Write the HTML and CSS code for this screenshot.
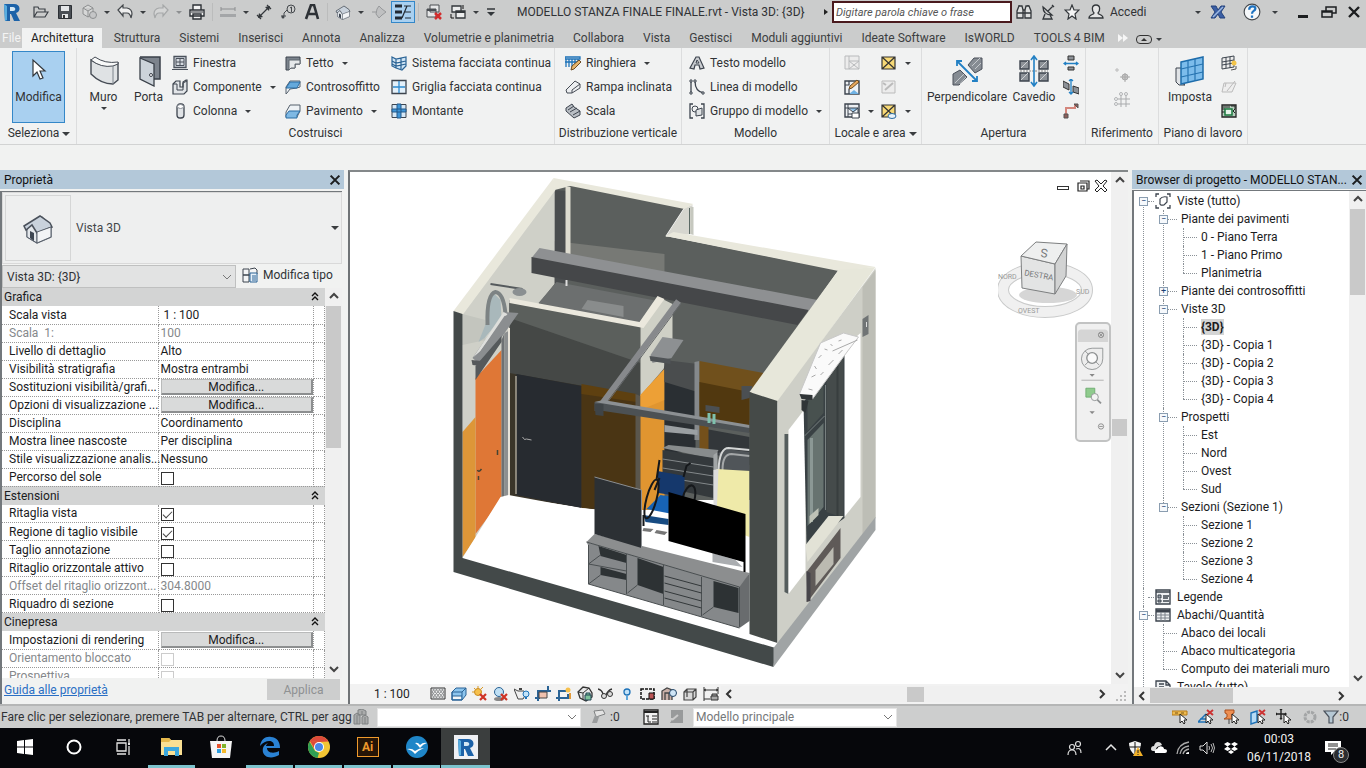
FILE: index.html
```
<!DOCTYPE html>
<html lang="it">
<head>
<title>MODELLO STANZA FINALE FINALE.rvt - Vista 3D: {3D}</title>
<meta charset="UTF-8">
<link rel="stylesheet" href="styles.css">
</head>
<body>

<!-- icon sprite -->
<svg class="sprite" width="0" height="0">
  <symbol id="revit" viewBox="0 0 20 20"><path d="M2 2h10c7 0 7 8 2 9l4 8h-6l-3-7H8v7H3z" fill="#1c62a8"/><path d="M2 2l3 2v14l-2 1z" fill="#58aee0"/><path d="M8 5h3c3 0 3 4 0 4H8z" fill="#d5e8f4"/></symbol>
  <symbol id="open" viewBox="0 0 16 16"><path d="M1 13V3h4l1 2h6v3M1 13l3-5h11l-3 5z" fill="none" stroke="#3a3f45" stroke-width="1.2"/></symbol>
  <symbol id="save" viewBox="0 0 16 16"><path d="M1.500 1.500h13v13h-13z" fill="#4a4f55" stroke="#2c3035"/><path d="M4 2h8v5H4zM5 10h6v4H5z" fill="#e4e6e8"/><path d="M6 11h2v3H6z" fill="#333"/></symbol>
  <symbol id="box" viewBox="0 0 16 16"><path d="M2 4l5-3 5 3v6l-5 3-5-3zM2 4l5 3 5-3M7 7v6" fill="#d6d7d7" stroke="#8d8f90"/><circle cx="12" cy="11" r="3.500" fill="#c5c6c7" stroke="#8d8f90"/></symbol>
  <symbol id="undo" viewBox="0 0 16 16"><path d="M1 6l5-5v3h4q5 1 5 6l-1 4q-1-5-4-5H6v3z" fill="#eee" stroke="#44484c" stroke-width="1.200"/></symbol>
  <symbol id="redo" viewBox="0 0 16 16"><path d="M15 6l-5-5v3H6q-5 1-5 6l1 4q1-5 4-5h4v3z" fill="#d4d5d5" stroke="#a6a8a9" stroke-width="1.200"/></symbol>
  <symbol id="print" viewBox="0 0 16 16"><path d="M4 6V1h8v5M1 6h14v6H1zM4 10h8v5H4z" fill="#f3f3f3" stroke="#2d3136" stroke-width="1.400"/><path d="M2 8h12" stroke="#2d3136"/></symbol>
  <symbol id="measure" viewBox="0 0 16 16"><path d="M1 5h14M1 3v4M15 3v4M1 11h14" fill="none" stroke="#8c8e90"/><path d="M0 10h16v3H0z" fill="#a4a6a8"/></symbol>
  <symbol id="dim" viewBox="0 0 16 16"><path d="M3 13L13 3M1 11l4 4M11 1l4 4" stroke="#33373b" stroke-width="1.200"/><path d="M2 14l1-5 4 4zM14 2l-5 1 4 4z" fill="#33373b"/></symbol>
  <symbol id="tag" viewBox="0 0 16 16"><circle cx="11" cy="5" r="4" fill="none" stroke="#44484c"/><path d="M7 6L4 9v3M1 12h5" fill="none" stroke="#44484c"/><circle cx="3" cy="13" r="1.500" fill="#44484c"/><path d="M10 4l1.500-1v5" fill="none" stroke="#44484c"/></symbol>
  <symbol id="letter" viewBox="0 0 16 16"><path d="M2 15L7 1h3l4 14M5 10h7" fill="none" stroke="#2d3136" stroke-width="2.600"/></symbol>
  <symbol id="house" viewBox="0 0 32 32"><path d="M5 14L20 5l9 9v11l-14 6-10-6V14z" fill="#eef1f4" stroke="#59616c" stroke-width="1.200"/><path d="M5 14l5-2 5 7v12L5 25z" fill="#e3e7eb" stroke="#59616c"/><path d="M2 14L18 4l10 7 2 4-15 6-5-8-6 5z" fill="#c9d2dc" stroke="#4a515b" stroke-width="1.500"/><path d="M15 20l14-5v10l-14 6z" fill="#f2f4f6" stroke="#59616c"/><path d="M8 19l4 2v8l-4-3z" fill="#3d4652"/></symbol>
  <symbol id="section" viewBox="0 0 16 16"><path d="M8 2l3 3 4 3-4 3-3 3-3-4 1-5z" fill="#bfc0c1" stroke="#97999b"/><path d="M1 8h5" stroke="#97999b"/></symbol>
  <symbol id="thin" viewBox="0 0 16 16"><path d="M0 2h7M0 8h7M0 14h7" stroke="#222a33" stroke-width="3"/><path d="M9 2h7M10 8h6M10 14h6M7 14l5-12" stroke="#222a33" stroke-width="1.200"/></symbol>
  <symbol id="closewin" viewBox="0 0 16 16"><path d="M4 1h9v7H4zM1 5h9v8H1z" fill="#e6e7e8" stroke="#4a4e53"/><path d="M1 6h9" stroke="#4a4e53" stroke-width="2"/><path d="M9 9l6 6M15 9l-6 6" stroke="#d22c2c" stroke-width="2.500"/></symbol>
  <symbol id="switch" viewBox="0 0 16 16"><path d="M2 2h9v6H2zM6 7h9v7H6z" fill="#eceded" stroke="#33373b" stroke-width="1.300"/><path d="M6 8h9" stroke="#33373b" stroke-width="2"/><path d="M13 1v4M1 10v4h3" fill="none" stroke="#111"/></symbol>
  <symbol id="more" viewBox="0 0 16 16"><path d="M4 5h8" stroke="#33373b" stroke-width="1.500"/><path d="M4 8h8l-4 4z" fill="#33373b"/></symbol>
  <symbol id="binoc" viewBox="0 0 16 16"><path d="M1 14V7l2-5h3l1 4v8zM9 14V6l1-4h3l2 5v7zM1 9h14M7 6h2M3 2V1M12 2V1" fill="#dfe0e0" stroke="#33373b" stroke-width="1.300"/></symbol>
  <symbol id="dish" viewBox="0 0 16 16"><path d="M3 3q0 8 9 8L3 3zM8 7l5-5M5 10l-2 5h9l-2-4M12 1l2 2" fill="none" stroke="#33373b" stroke-width="1.300"/></symbol>
  <symbol id="star" viewBox="0 0 16 16"><path d="M8 1l2 5h5l-4 4 1 5-4-3-4 3 1-5-4-4h5z" fill="#f4f4f4" stroke="#33373b" stroke-width="1.200"/></symbol>
  <symbol id="user" viewBox="0 0 16 16"><path d="M8 1c5 0 4 6 2 8 0 2 5 1 5 5H1c0-4 5-3 5-5C4 7 3 1 8 1z" fill="#e6e6e6" stroke="#33373b" stroke-width="1.300"/></symbol>
  <symbol id="exch" viewBox="0 0 16 16"><path d="M1 2h5l2 4 3-4h4l-4 6 4 6h-5l-2-4-3 4H1l4-6z" fill="#3b5fa5" stroke="#24427c"/><path d="M3 13L13 3" stroke="#9db9e2" stroke-width="1.500"/></symbol>
  <symbol id="help" viewBox="0 0 16 16"><circle cx="8" cy="8" r="7" fill="#f6f8fa" stroke="#44484c"/><path d="M5.500 6q0-3 3-3 2.500 0 2.500 2 0 1-1.500 2T8 9.500M8 11v2" fill="none" stroke="#1d72c0" stroke-width="2"/></symbol>
  <symbol id="restore" viewBox="0 0 16 16"><path d="M5 7V3h10v6h-4M5 3h10M1 7h10v6H1zM1 8h10" fill="none" stroke="#1c1e20" stroke-width="1.500"/></symbol>
  <symbol id="cross" viewBox="0 0 16 16"><path d="M3 3l10 10M13 3L3 13" stroke="#1c1e20" stroke-width="2.400"/></symbol>
  <symbol id="cursor" viewBox="0 0 16 24"><path d="M2 2v16l4-4 3 7 3-1-3-7h5z" fill="#fff" stroke="#33373b" stroke-width="1.200"/></symbol>

  <!-- ribbon -->
  <symbol id="wall" viewBox="0 0 32 32"><path d="M3 5q10 7 22 5l5-2v17l-5 4q-12 0-22-10z" fill="#dfe2e4" stroke="#454b54" stroke-width="1.400"/><path d="M3 5l4-3q10 7 23 5v2l-5 2q-12 2-22-6z" fill="#f8f9f9" stroke="#454b54"/><path d="M25 11v18" stroke="#7d848c"/></symbol>
  <symbol id="door" viewBox="0 0 32 32"><path d="M7 2h20v22h-6" fill="#7d848d" stroke="#3a4049" stroke-width="1.500"/><path d="M7 3l14 6v22L7 24z" fill="#ccd3da" stroke="#3a4049" stroke-width="1.300"/><circle cx="18" cy="20" r="1.500" fill="#fff" stroke="#3a4049"/></symbol>
  <symbol id="window" viewBox="0 0 16 16"><path d="M2 1.500h12v11H2z" fill="#d5dae0" stroke="#4a515b" stroke-width="1.300"/><path d="M4 3.500h8v7H4zM8 3v8M4 7h8M0 14.500h16" fill="none" stroke="#4a515b"/></symbol>
  <symbol id="comp" viewBox="0 0 16 16"><path d="M1 5l3-3h4v6h3V3l3-2h1v11l-3 3H1z" fill="#e2e5e8" stroke="#3d444e" stroke-width="1.200"/><path d="M1 5h4v6h6V4M11 4l4-2" fill="none" stroke="#3d444e"/></symbol>
  <symbol id="column" viewBox="0 0 16 16"><rect x="5" y="1" width="7" height="14" rx="3" fill="#e0e3e6" stroke="#3d444e" stroke-width="1.300"/><ellipse cx="8.500" cy="3.500" rx="3" ry="2" fill="#fff" stroke="#8a9098"/></symbol>
  <symbol id="roof" viewBox="0 0 16 16"><path d="M1 2h14v7h-5v4H6l-2 2H1z" fill="#7b838c" stroke="#3d444e"/><path d="M4 5h11v4h-5v4H6l-2 2z" fill="#e5e8ea" stroke="#5f666f"/></symbol>
  <symbol id="ceil" viewBox="0 0 16 16"><path d="M1 8l4-6h10v6l-3 1-7 1-3 4-1 1z" fill="#eef2f5" stroke="#55606c"/><path d="M1 9l4-6h10l-3 6z" fill="#64a9dc" stroke="#2b6ca3"/></symbol>
  <symbol id="floor" viewBox="0 0 16 16"><path d="M1 9l4-7h10v6l-3 6H1z" fill="#eef2f5" stroke="#55606c"/><path d="M1 12l3-4h11l-3 4v3H1z" fill="#7fb9e4" stroke="#2b6ca3"/></symbol>
  <symbol id="curtain" viewBox="0 0 16 16"><path d="M1 2l4 2 10-2v9l-4 4-6-2-4-2zM5 4v9M10 3v11M1 6l4 2 10-2M1 9l4 2 10-2" fill="#cfe5f6" stroke="#2a6395" stroke-width="1.200"/></symbol>
  <symbol id="grid" viewBox="0 0 16 16"><path d="M1 1.500h14v13H1z" fill="#e3f0fa" stroke="#3d444e" stroke-width="1.300"/><path d="M8 2v12M2 8h12" stroke="#2d8ad0" stroke-width="1.300"/></symbol>
  <symbol id="mullion" viewBox="0 0 16 16"><path d="M1 1.500h14v13H1z" fill="#d5e8f7" stroke="#3d444e"/><path d="M6 1h4v14H6zM1 6h14v3H1z" fill="#3f96d8" stroke="#23598a"/></symbol>
  <symbol id="rail" viewBox="0 0 16 16"><path d="M0 2h15v2H0zM1 4v8M4 4v8M7 4v8M10 4v6M13 4v3M0 7h13" fill="none" stroke="#1d72b8" stroke-width="1.300"/><path d="M6 15l1-4 7-6 2 2-7 7z" fill="#e8b66c" stroke="#6e4c22"/></symbol>
  <symbol id="ramp" viewBox="0 0 16 16"><path d="M1 11L10 2l5 3v4L7 14H2z" fill="#eceef0" stroke="#454b54"/><path d="M7 14v-3l8-6" fill="none" stroke="#454b54"/></symbol>
  <symbol id="stair" viewBox="0 0 16 16"><path d="M1 5l6-4 2 3 3 2 3 2v4l-6 3-8-7z" fill="#b9bec4" stroke="#3d444e"/><path d="M3 7l6-4M5 9l7-4M8 12l7-4" stroke="#3d444e"/></symbol>
  <symbol id="mtext" viewBox="0 0 16 16"><path d="M1 13L7 2h3l5 11-4 1-1-4H6l-1 4z" fill="#c9ccd0" stroke="#3d444e" stroke-width="1.200"/><path d="M7 8l1-3 2 3z" fill="#fff" stroke="#3d444e"/></symbol>
  <symbol id="mline" viewBox="0 0 16 16"><path d="M2 2v12M6 2q0 11 9 12" fill="none" stroke="#3d444e" stroke-width="1.300"/><path d="M1 1h2v2H1zM1 13h2v2H1zM5 1h2v2H5zM13 13h2v2h-2z" fill="#fff" stroke="#3d444e"/></symbol>
  <symbol id="mgroup" viewBox="0 0 16 16"><path d="M4 1H1v14h3M12 1h3v14h-3" fill="none" stroke="#3d444e" stroke-width="1.300"/><circle cx="6" cy="6" r="3" fill="none" stroke="#3d444e"/><path d="M7 7l6-2v7l-6 1z" fill="#dfe2e4" stroke="#3d444e"/></symbol>
  <symbol id="room0" viewBox="0 0 16 16"><path d="M1 1h14v13H1zM5 1v13M5 6h10M5 6l10 8M15 6L5 14" fill="#ececec" stroke="#b8babc"/></symbol>
  <symbol id="room1" viewBox="0 0 16 16"><path d="M1 2h14v13H1z" fill="#eef1f4" stroke="#3d444e" stroke-width="1.400"/><path d="M5 15l5-4 5 4z" fill="#6fb2e4"/><path d="M5 2v4H1M5 10v5" fill="none" stroke="#3d444e" stroke-width="1.200"/><path d="M5 10l1-3 7-6 2 2-7 6z" fill="#e8a85c" stroke="#6e4c22"/></symbol>
  <symbol id="room2" viewBox="0 0 16 16"><path d="M1 1h14v13H1z" fill="#eef1f4" stroke="#3d444e" stroke-width="1.400"/><path d="M5 5h10l-5 4z" fill="#8fc3ea"/><path d="M4 1v4M1 5h3v9M4 5h10v6H4M4 5l5 4 5-4" fill="none" stroke="#3d444e"/><path d="M8 10h7v5H8z" fill="#fff" stroke="#3d444e"/></symbol>
  <symbol id="area" viewBox="0 0 16 16"><path d="M1 2h13v12H1zM1 2l13 12M14 2L1 14" fill="#f7d976" stroke="#333" stroke-width="1.200"/></symbol>
  <symbol id="area0" viewBox="0 0 16 16"><path d="M1 2h13v12H1z" fill="#ececec" stroke="#bbb"/><path d="M4 11l8-7M2 4l3 2" stroke="#bbb" stroke-width="2"/></symbol>
  <symbol id="area2" viewBox="0 0 16 16"><path d="M1 2h13v12H1zM1 2l13 12M14 2L1 14" fill="#f7d976" stroke="#333" stroke-width="1.200"/><ellipse cx="11" cy="13" rx="4" ry="2.500" fill="#e9f2f8" stroke="#2b6ca3"/></symbol>
  <symbol id="perp" viewBox="0 0 32 32"><path d="M2 30V19l7-4 7 7-8 8zM17 10l6-7h8v11l-7 4z" fill="#868c93" stroke="#4a515b"/><path d="M4 28l9-9M9 29l6-7M21 11l8-8M24 14l6-6" stroke="#c5c9cd"/><path d="M6 6l20 20M6 11V6h5M26 21v5h-5" fill="none" stroke="#2280c4" stroke-width="1.800"/></symbol>
  <symbol id="shaft" viewBox="0 0 32 32"><path d="M2 6h9v8H2zM21 6h9v8h-9zM2 18h9v8H2zM21 18h9v8h-9z" fill="#8d9298" stroke="#3d444e" stroke-width="1.400"/><path d="M3 13l7-7M22 13l7-7M3 25l7-7M22 25l7-7" stroke="#cfd2d5"/><path d="M2 16h28" stroke="#888" stroke-dasharray="2 1"/><path d="M16 2v29M13 5l3-4 3 4M13 27l3 4 3-4" fill="none" stroke="#2280c4" stroke-width="1.600"/></symbol>
  <symbol id="opwall" viewBox="0 0 16 16"><path d="M5 1h6v4H5zM5 12h6v3H5z" fill="#8d9298" stroke="#333"/><path d="M1 8.500h14M3 7L1 8.500 3 10M13 7l2 1.500-2 1.500" fill="none" stroke="#2280c4" stroke-width="1.300"/></symbol>
  <symbol id="opvert" viewBox="0 0 16 16"><path d="M0 2l6 3v6L0 8zM10 7l6 2v6l-6-2z" fill="#8d9298" stroke="#333"/><path d="M8 0v15M6 2l2-2 2 2M6 13l2 2 2-2" fill="none" stroke="#2280c4" stroke-width="1.300"/></symbol>
  <symbol id="dormer" viewBox="0 0 16 16"><path d="M3 14V5h9V2" fill="none" stroke="#d4867c" stroke-width="2"/><path d="M11 1h4v4zM1 11h4v4H1z" fill="#8d5f5b" stroke="#555"/></symbol>
  <symbol id="level0" viewBox="0 0 16 16"><path d="M1 3h4M3 1v4" stroke="#bbb"/><circle cx="11" cy="10" r="3" fill="#c4c4c4" stroke="#aaa"/><path d="M11 6v9M6 10h10" stroke="#aaa"/></symbol>
  <symbol id="grid0" viewBox="0 0 16 16"><path d="M4 8h12M4 13h12M7 4v12M12 4v12" stroke="#a9abad"/><circle cx="7" cy="3" r="1.500" fill="none" stroke="#b2b4b6"/><circle cx="12" cy="3" r="1.500" fill="none" stroke="#b2b4b6"/><circle cx="2" cy="8" r="1.500" fill="none" stroke="#b2b4b6"/><circle cx="2" cy="13" r="1.500" fill="none" stroke="#b2b4b6"/></symbol>
  <symbol id="plane" viewBox="0 0 32 32"><path d="M2 13h6v15l3 2H5l-3-3z" fill="#e0e3e6" stroke="#3d444e"/><path d="M7 7l22-5v22L7 29z" fill="#7cbceb" stroke="#1d6cab" stroke-width="1.500"/><path d="M14 6v21M21 4v22M7 14l22-5M7 22l22-5" stroke="#2573b0" stroke-width="1.200"/></symbol>
  <symbol id="pshow" viewBox="0 0 16 16"><path d="M1 3l12-2v11L1 14zM5 2v11M9 2v11M1 7l12-2M1 10l12-2" fill="#eee" stroke="#3d444e"/><circle cx="13" cy="8" r="2.500" fill="#f5c64a"/><path d="M10 15l5-1v-3" fill="none" stroke="#555"/></symbol>
  <symbol id="pref" viewBox="0 0 16 16"><path d="M3 4h12l-4 9H1zM5 4l-1 4M14 2L6 12" fill="#eee" stroke="#bbb"/></symbol>
  <symbol id="pview" viewBox="0 0 16 16"><path d="M1 2h14v12H1z" fill="#b9cfc0" stroke="#222" stroke-width="1.300"/><path d="M1 4h8M1 6h3M1 9h3" stroke="#222"/><path d="M4 6h7v6H4z" fill="#e7f3ea" stroke="#1b7a3f" stroke-width="1.500"/><path d="M10 3h4v3l-2 2 2 2" fill="none" stroke="#222"/></symbol>
  <symbol id="types" viewBox="0 0 16 16"><path d="M1 2h6v6H1zM8 2l5-1 2 2v4H8M1 8h6v7H1zM7 8h4" fill="#f4f5f6" stroke="#3d444e"/><path d="M8 6h7v9H8z" fill="#e6f0f8" stroke="#2a6395"/><path d="M10 9h4M10 11h4M10 13h4" stroke="#2a6395"/></symbol>

  <!-- browser tree -->
  <symbol id="views" viewBox="0 0 16 16"><path d="M4 1H1v3M12 1h3v3M4 15H1v-3M12 15h3v-3" fill="none" stroke="#3d444e" stroke-width="1.300"/><path d="M5 6q2-3 7-2v5l-3 3q-5 1-4-3z" fill="#fff" stroke="#3d444e" stroke-width="1.200"/></symbol>
  <symbol id="legend" viewBox="0 0 16 16"><path d="M1 1h14v14H1z" fill="#eef0f2" stroke="#3d444e" stroke-width="1.400"/><path d="M1 3h14M8 7h6M8 9h5M8 12h6" stroke="#3d444e" stroke-width="1.400"/><path d="M3 6h3v3H3zM3 11h3v2H3z" fill="#9aa2aa" stroke="#3d444e"/></symbol>
  <symbol id="sched" viewBox="0 0 16 16"><path d="M1 2h14v12H1z" fill="#eef0f2" stroke="#3d444e" stroke-width="1.400"/><path d="M1 4h14" stroke="#3d444e" stroke-width="3"/><path d="M1 8h14M1 11h14M6 5v9M10 5v9" stroke="#7a818a"/></symbol>
  <symbol id="sheet" viewBox="0 0 16 16"><path d="M1 2h10l4 4v9H1zM11 2v4h4M4 5h5M4 8h5" fill="#eef0f2" stroke="#3d444e" stroke-width="1.300"/></symbol>

  <!-- view controls -->
  <symbol id="v-detail" viewBox="0 0 16 16"><path d="M1 2h14v11H1z" fill="#eee" stroke="#333"/><path d="M2 6l3-4M2 9l6-7M2 13l9-11M5 13l9-11M8 13l6-7M11 13l3-4M14 6l-3-4M14 9L8 2M14 13L5 2M11 13L2 2M8 13L2 6M5 13L2 9" stroke="#8c8e90"/></symbol>
  <symbol id="v-style" viewBox="0 0 16 16"><path d="M1 6l4-4h10v7l-4 5H1z" fill="#8cc5ee" stroke="#2a6395"/><path d="M2 10h8v3H2z" fill="#f2f6f8"/><path d="M1 6h10v8H1zM11 6l4-4M1 10h10" fill="none" stroke="#2a6395"/></symbol>
  <symbol id="v-sun" viewBox="0 0 16 16"><circle cx="6" cy="6" r="3.500" fill="#f6c04c" stroke="#c98a1c"/><path d="M6 0v2M0 6h2M2 2l1 1M11 1L9 3" stroke="#d99a27"/><path d="M8 8l6 6M14 8l-6 6" stroke="#cf3325" stroke-width="2.200"/></symbol>
  <symbol id="v-shadow" viewBox="0 0 16 16"><ellipse cx="6" cy="13" rx="5" ry="2" fill="#888"/><circle cx="6" cy="6" r="4.500" fill="#bfe0f5" stroke="#2a6395"/><path d="M8 8l6 6M14 8l-6 6" stroke="#cf3325" stroke-width="2.200"/></symbol>
  <symbol id="v-pot" viewBox="0 0 16 16"><path d="M0 3l4 2h6l2 3-3 5H4L2 8z" fill="#eee" stroke="#444"/><path d="M5 3h3" stroke="#444" stroke-width="2"/><circle cx="12" cy="8" r="3" fill="#c4e3f8" stroke="#1d72b8"/><path d="M11 12h2" stroke="#1d72b8" stroke-width="2"/></symbol>
  <symbol id="v-crop" viewBox="0 0 16 16"><path d="M0 12h5M3 15V5h10V0M3 5h13" fill="none" stroke="#2a6395" stroke-width="2"/><path d="M4 6h8v6H4z" fill="#efc1ae" stroke="#444"/></symbol>
  <symbol id="v-cropshow" viewBox="0 0 16 16"><path d="M0 12h5M3 15V5h7M4 12h8V8" fill="none" stroke="#2a6395" stroke-width="2"/><circle cx="12" cy="4" r="2.500" fill="#f6c04c"/><path d="M14 7v6" stroke="#e29a3a" stroke-width="2"/></symbol>
  <symbol id="v-lock" viewBox="0 0 16 16"><path d="M1 6l5-5 6 1 3 5v4l-6 4-6-3z" fill="#e8e8e8" stroke="#333" stroke-width="1.300"/><path d="M1 6l5 1 6-5M6 7v7" fill="none" stroke="#333"/><path d="M8 9h6v5H8zM9 9V7h4v2" fill="#7fc29b" stroke="#245"/></symbol>
  <symbol id="v-glass" viewBox="0 0 16 16"><path d="M0 3q4 1 5 5M8 9q2-5 6-6M5 9h3" fill="none" stroke="#333" stroke-width="1.300"/><circle cx="6" cy="10" r="2.500" fill="#ddd" stroke="#333"/><circle cx="12" cy="8" r="2.500" fill="#ddd" stroke="#333"/></symbol>
  <symbol id="v-bulb" viewBox="0 0 16 16"><circle cx="8" cy="6" r="3" fill="#c4e3f8" stroke="#1d72b8" stroke-width="1.300"/><path d="M7 10h2v4H7z" fill="#5fa8dc"/></symbol>
  <symbol id="v-temp" viewBox="0 0 16 16"><path d="M1 3h13v10H1z" fill="#eee" stroke="#111" stroke-width="1.500" stroke-dasharray="3 1"/><path d="M9 7h5v6H9z" fill="#b55" stroke="#111"/></symbol>
  <symbol id="v-anal" viewBox="0 0 16 16"><path d="M1 14V5l5-3 5 2v10M4 14V7h4v7" fill="#c9b0a8" stroke="#444" stroke-width="1.300"/><circle cx="12" cy="7" r="3.500" fill="#cfe5f6" stroke="#246"/></symbol>
  <symbol id="v-disp" viewBox="0 0 16 16"><path d="M2 6l3-3h9v8l-3 3H2zM2 6h9v8M11 6l3-3M5 3v8" fill="#d8d8d8" stroke="#444" stroke-width="1.200"/></symbol>
  <symbol id="v-cons" viewBox="0 0 16 16"><path d="M1 1v14M15 1v7M1 4h14M3 3L1 4l2 1M13 3l2 1-2 1M1 13h6" fill="none" stroke="#333"/><path d="M8 10h7v4H8zM9 10V8h5v2" fill="#aaa" stroke="#333"/></symbol>
  <symbol id="up" viewBox="0 0 16 16"><path d="M4 10l4-4 4 4" fill="none" stroke="#444" stroke-width="2"/></symbol>
  <symbol id="down" viewBox="0 0 16 16"><path d="M4 6l4 4 4-4" fill="none" stroke="#444" stroke-width="2"/></symbol>
  <symbol id="left" viewBox="0 0 16 16"><path d="M10 4L6 8l4 4" fill="none" stroke="#333" stroke-width="2"/></symbol>
  <symbol id="right" viewBox="0 0 16 16"><path d="M6 4l4 4-4 4" fill="none" stroke="#333" stroke-width="2"/></symbol>
  <symbol id="fold" viewBox="0 0 8 10"><path d="M1 4l3-3 3 3M1 8l3-3 3 3" fill="none" stroke="#111" stroke-width="1.400"/></symbol>

  <!-- status bar -->
  <symbol id="s-work" viewBox="0 0 16 16"><path d="M1 6l3-2 3 2v9H1zM9 8l3-2 3 2v7H9zM5 1l4-1 4 2v4H5z" fill="#a9abab" stroke="#7f8182"/><path d="M4 6v9M12 8v7M9 2v4" stroke="#7f8182"/></symbol>
  <symbol id="s-req" viewBox="0 0 16 16"><path d="M4 2l9-1 2 4-9 3z" fill="#e3e3e3" stroke="#7f8182"/><path d="M5 6L2 14h5l2-6" fill="#9a9c9d"/></symbol>
  <symbol id="s-opt" viewBox="0 0 16 16"><path d="M1 1h14v14H1z" fill="#f2f2f2" stroke="#222" stroke-width="1.300"/><path d="M1 3h14" stroke="#222" stroke-width="2"/><path d="M3 7h3M5 7v6h3M9 7h5M9 10h5M9 13h5" fill="none" stroke="#222"/></symbol>
  <symbol id="s-add" viewBox="0 0 16 16"><path d="M2 1h12v13H1l3-5H2z" fill="#989a9b"/><path d="M3 11l6-5" stroke="#ccc" stroke-width="2"/></symbol>
  <symbol id="arrow" viewBox="0 0 16 16"><path d="M8 5v9l2-2 2 3 1-1-1-3h3z" fill="#fff" stroke="#222"/></symbol>
  <symbol id="s-link" viewBox="0 0 16 16"><path d="M0 2h15v4H0z" fill="#edbb52" stroke="#b77a15"/><path d="M3 4h3M9 4h3" stroke="#7a5210"/><use href="#arrow"/></symbol>
  <symbol id="s-under" viewBox="0 0 16 16"><path d="M0 13L8 5M0 13h10M2 10h7" fill="none" stroke="#1d72b8" stroke-width="1.500"/><path d="M9 1l6 5M15 1L9 6" stroke="#c33" stroke-width="2"/><use href="#arrow"/></symbol>
  <symbol id="s-pin" viewBox="0 0 16 16"><path d="M1 1h9v3l-2 1v3l3 2H0l3-2V5L1 4z" fill="#ee8f52" stroke="#a94e1c"/><path d="M5 10v5" stroke="#444"/><use href="#arrow"/></symbol>
  <symbol id="s-face" viewBox="0 0 16 16"><path d="M1 4l6-2v11l-6 2z" fill="#b7dbf5" stroke="#1d72b8" stroke-width="1.400"/><path d="M9 1l6 5M15 1L9 6" stroke="#c33" stroke-width="2"/><use href="#arrow"/></symbol>
  <symbol id="s-drag" viewBox="0 0 16 16"><path d="M5 0v10M0 5h10M4 1l1-1 1 1M4 9l1 1 1-1M1 4L0 5l1 1M9 4l1 1-1 1" fill="none" stroke="#222" stroke-width="1.400"/><use href="#arrow"/></symbol>
  <symbol id="s-bg" viewBox="0 0 16 16"><circle cx="8" cy="8" r="5" fill="none" stroke="#a3a5a6" stroke-width="3" stroke-dasharray="3 1"/></symbol>
  <symbol id="s-filter" viewBox="0 0 16 16"><path d="M1 2h14l-5 6v6H6V8z" fill="#b6c8d4" stroke="#4a515b" stroke-width="1.200"/></symbol>

  <!-- taskbar -->
  <symbol id="t-win" viewBox="0 0 24 24"><path d="M4 6l7-1v6.500H4zM12 5l8-1v7.500h-8zM4 12.500h7V19l-7-1zM12 12.500h8V20l-8-1z" fill="#fff"/></symbol>
  <symbol id="t-cort" viewBox="0 0 24 24"><circle cx="12" cy="12" r="6.500" fill="none" stroke="#fff" stroke-width="2"/></symbol>
  <symbol id="t-task" viewBox="0 0 24 24"><path d="M6 8h9v8H6zM6 5h9M6 19h9M18 4v4M18 11v9" fill="none" stroke="#e5e5e5" stroke-width="1.300"/><path d="M17 8h2v2h-2z" fill="#e5e5e5"/></symbol>
  <symbol id="t-exp" viewBox="0 0 24 24"><path d="M1 3h8l2 2h11v15H1z" fill="#f9df93"/><path d="M1 3h8l2 2-2 2H1z" fill="#e5b84c"/><path d="M4 21v-9h15v9h-4v-5H8v5z" fill="#3ba7de"/></symbol>
  <symbol id="t-store" viewBox="0 0 24 24"><path d="M8 6q0-5 4-5t4 5" fill="none" stroke="#ddd"/><path d="M1 6h22l-2 17H3z" fill="#f5f5f5"/><path d="M8 9h4v4H8z" fill="#e6532d"/><path d="M13 9h4v4h-4z" fill="#7fb32b"/><path d="M8 14h4v4H8z" fill="#2d9ee0"/><path d="M13 14h4v4h-4z" fill="#f5b92a"/></symbol>
  <symbol id="t-edge" viewBox="0 0 24 24"><path d="M2 11C3 4 8 1 13 2c6 0 9 5 9 11H9c0 5 7 6 12 3v4C13 25 3 22 5 13c1-3 3-4 5-5-1 1-2 2-2 3h8c0-7-9-6-14 0z" fill="#2a82d4"/></symbol>
  <symbol id="t-chrome" viewBox="0 0 24 24"><circle cx="12" cy="12" r="11" fill="#f2c534"/><path d="M2.500 6.500A11 11 0 0 1 21.500 6.500L12 7z" fill="#dc4a3b"/><path d="M2.500 6.500L8 16l4 2-1.500 5A11 11 0 0 1 2.500 6.500z" fill="#2f9e54"/><path d="M3 6l9 1v6l-4 2z" fill="#dc4a3b"/><circle cx="12" cy="12" r="5" fill="#fff"/><circle cx="12" cy="12" r="4" fill="#4a88e8"/></symbol>
  <symbol id="t-oo" viewBox="0 0 24 24"><circle cx="12" cy="12" r="11" fill="#1f86c8"/><path d="M10 8q3-1 5 2 3-3 7-2-4 1-7 5-2-3-5-5zM2 14q5-1 8 2 4-3 9-3-5 2-9 6-3-4-8-5z" fill="#fff"/></symbol>
  <symbol id="t-people" viewBox="0 0 16 16"><circle cx="5" cy="7" r="2.500" fill="none" stroke="#ddd" stroke-width="1.200"/><circle cx="11" cy="4" r="2.500" fill="none" stroke="#ddd" stroke-width="1.200"/><path d="M1 15q0-5 4-5t4 5M9 9q5-2 5 4" fill="none" stroke="#ddd" stroke-width="1.200"/></symbol>
  <symbol id="t-up" viewBox="0 0 16 16"><path d="M3 10l5-5 5 5" fill="none" stroke="#e5e5e5" stroke-width="1.500"/></symbol>
  <symbol id="t-shield" viewBox="0 0 16 16"><path d="M8 1l6 2q0 8-6 12Q2 11 2 3z" fill="#f4f4f4"/><path d="M8 2v12M2 7h12" stroke="#111"/><path d="M11 7l5 9H6z" fill="#f3b229"/><path d="M11 10v3M11 14v1" stroke="#222"/></symbol>
  <symbol id="t-cloud" viewBox="0 0 16 16"><path d="M0 9q0-3 3-3 1-4 4-4 3 0 4 3l-5 2-2 4H3q-3 0-3-2z" fill="#ddd"/><path d="M4 13q-1-4 2-4 2-4 6-2 1 1 1 2 3 0 3 2 0 2-2 2z" fill="#fff"/></symbol>
  <symbol id="t-wifi" viewBox="0 0 16 16"><path d="M2 14Q3 4 14 2M5 14q1-7 9-8M8 14q1-4 6-5" fill="none" stroke="#aaa" stroke-width="1.300"/><path d="M11 14q0-2 3-2v2z" fill="#fff"/></symbol>
  <symbol id="t-vol" viewBox="0 0 16 16"><path d="M1 6h3l4-4v12l-4-4H1z" fill="none" stroke="#ddd"/><path d="M10 6q1 2 0 4M12 4q3 4 0 8M14 3q3 5 0 10" fill="none" stroke="#bbb"/></symbol>
  <symbol id="t-drop" viewBox="0 0 16 16"><path d="M4.500 2L8 4 4.500 6.500 1 4zM11.500 2L15 4l-3.500 2.500L8 4zM4.500 6.500L8 9l-3.500 2L1 9zM11.500 6.500L15 9l-3.500 2L8 9zM8 10l3 2-3 2-3-2z" fill="#fff"/></symbol>
  <symbol id="t-note" viewBox="0 0 16 16"><path d="M0 1h16v11H9l-3 3v-3H0z" fill="#fff"/><path d="M3 4h10M3 6h10M3 9h8" stroke="#222"/></symbol>
</svg>

<!-- title bar -->
<header class="titlebar">
  <button class="q logo"><svg class="i20"><use href="#revit"/></svg></button>
  <button class="q"><svg><use href="#open"/></svg></button>
  <button class="q"><svg><use href="#save"/></svg></button>
  <button class="q"><svg><use href="#box"/></svg></button>
  <span class="c"><i class="caret"></i></span>
  <button class="q"><svg><use href="#undo"/></svg></button>
  <span class="c"><i class="caret"></i></span>
  <button class="q"><svg><use href="#redo"/></svg></button>
  <span class="c"><i class="caret dim"></i></span>
  <button class="q"><svg><use href="#print"/></svg></button>
  <span class="vsep"></span>
  <button class="q"><svg><use href="#measure"/></svg></button>
  <span class="c"><i class="caret"></i></span>
  <button class="q"><svg><use href="#dim"/></svg></button>
  <button class="q"><svg><use href="#tag"/></svg></button>
  <button class="q"><svg><use href="#letter"/></svg></button>
  <span class="vsep"></span>
  <button class="q"><svg><use href="#house"/></svg></button>
  <span class="c"><i class="caret"></i></span>
  <button class="q"><svg><use href="#section"/></svg></button>
  <button class="q on"><svg><use href="#thin"/></svg></button>
  <span class="vsep"></span>
  <button class="q"><svg><use href="#closewin"/></svg></button>
  <button class="q"><svg><use href="#switch"/></svg></button>
  <span class="c"><i class="caret"></i></span>
  <button class="q slim"><svg><use href="#more"/></svg></button>
  <h1 class="title">MODELLO STANZA FINALE FINALE.rvt - Vista 3D: {3D}</h1>
  <div class="infocenter">
    <span class="c"><i class="caret side"></i></span>
    <input class="search" type="text" placeholder="Digitare parola chiave o frase" aria-label="Cerca">
    <button class="q"><svg><use href="#binoc"/></svg></button>
    <button class="q"><svg><use href="#dish"/></svg></button>
    <button class="q"><svg><use href="#star"/></svg></button>
    <button class="login"><svg><use href="#user"/></svg>Accedi<i class="caret"></i></button>
    <button class="q wide"><svg><use href="#exch"/></svg></button>
    <button class="q wide"><svg class="i18"><use href="#help"/></svg></button>
    <span class="c"><i class="caret"></i></span>
    <button class="q win min"><i class="dash"></i></button>
    <button class="q win"><svg><use href="#restore"/></svg></button>
    <button class="q"><svg><use href="#cross"/></svg></button>
  </div>
</header>

<nav class="tabs">
  <a class="file" href="#">File</a>
  <a class="active" href="#">Architettura</a>
  <a href="#">Struttura</a>
  <a href="#">Sistemi</a>
  <a href="#">Inserisci</a>
  <a href="#">Annota</a>
  <a href="#">Analizza</a>
  <a href="#">Volumetrie e planimetria</a>
  <a href="#">Collabora</a>
  <a href="#">Vista</a>
  <a href="#">Gestisci</a>
  <a href="#">Moduli aggiuntivi</a>
  <a href="#">Ideate Software</a>
  <a href="#">IsWORLD</a>
  <a href="#">TOOLS 4 BIM</a>
  <span class="more"><i></i><i></i></span>
  <button class="ribbonmin"><span><i class="tri-up"></i></span><i class="caret"></i></button>
</nav>

<!-- ribbon -->
<section class="ribbon">
  <div class="panel p-sel">
    <div class="tools"><button class="big sel"><svg class="cur"><use href="#cursor"/></svg>Modifica</button></div>
    <div class="ptitle">Seleziona <i class="caret lg"></i></div>
  </div>
  <div class="panel p-build">
    <div class="tools">
      <button class="big"><svg><use href="#wall"/></svg>Muro<i class="caret"></i></button>
      <button class="big"><svg><use href="#door"/></svg>Porta</button>
      <div class="col c1">
        <button><svg><use href="#window"/></svg>Finestra</button>
        <button><svg><use href="#comp"/></svg>Componente<i class="caret"></i></button>
        <button><svg><use href="#column"/></svg>Colonna<i class="caret"></i></button>
      </div>
      <div class="col c2">
        <button><svg><use href="#roof"/></svg>Tetto<i class="caret"></i></button>
        <button><svg><use href="#ceil"/></svg>Controsoffitto</button>
        <button><svg><use href="#floor"/></svg>Pavimento<i class="caret"></i></button>
      </div>
      <div class="col">
        <button><svg><use href="#curtain"/></svg>Sistema facciata continua</button>
        <button><svg><use href="#grid"/></svg>Griglia facciata continua</button>
        <button><svg><use href="#mullion"/></svg>Montante</button>
      </div>
    </div>
    <div class="ptitle">Costruisci</div>
  </div>
  <div class="panel p-circ">
    <div class="tools"><div class="col">
      <button><svg><use href="#rail"/></svg>Ringhiera<i class="caret"></i></button>
      <button><svg><use href="#ramp"/></svg>Rampa inclinata</button>
      <button><svg><use href="#stair"/></svg>Scala</button>
    </div></div>
    <div class="ptitle">Distribuzione verticale</div>
  </div>
  <div class="panel p-model">
    <div class="tools"><div class="col">
      <button><svg><use href="#mtext"/></svg>Testo modello</button>
      <button><svg><use href="#mline"/></svg>Linea di modello</button>
      <button><svg><use href="#mgroup"/></svg>Gruppo di modello<i class="caret"></i></button>
    </div></div>
    <div class="ptitle">Modello</div>
  </div>
  <div class="panel p-room">
    <div class="tools">
      <div class="col">
        <button><svg><use href="#room0"/></svg></button>
        <button><svg><use href="#room1"/></svg></button>
        <button><svg><use href="#room2"/></svg><i class="caret"></i></button>
      </div>
      <div class="col">
        <button><svg><use href="#area"/></svg><i class="caret"></i></button>
        <button><svg><use href="#area0"/></svg></button>
        <button><svg><use href="#area2"/></svg><i class="caret"></i></button>
      </div>
    </div>
    <div class="ptitle">Locale e area <i class="caret lg"></i></div>
  </div>
  <div class="panel p-open">
    <div class="tools">
      <button class="big"><svg><use href="#perp"/></svg>Perpendicolare</button>
      <button class="big"><svg><use href="#shaft"/></svg>Cavedio</button>
      <div class="col">
        <button><svg><use href="#opwall"/></svg></button>
        <button><svg><use href="#opvert"/></svg></button>
        <button><svg><use href="#dormer"/></svg></button>
      </div>
    </div>
    <div class="ptitle">Apertura</div>
  </div>
  <div class="panel p-ref">
    <div class="tools"><div class="col">
      <button><svg><use href="#level0"/></svg></button>
      <button><svg><use href="#grid0"/></svg></button>
    </div></div>
    <div class="ptitle">Riferimento</div>
  </div>
  <div class="panel p-plane">
    <div class="tools">
      <button class="big"><svg><use href="#plane"/></svg>Imposta</button>
      <div class="col">
        <button><svg><use href="#pshow"/></svg></button>
        <button><svg><use href="#pref"/></svg></button>
        <button><svg><use href="#pview"/></svg></button>
      </div>
    </div>
    <div class="ptitle">Piano di lavoro</div>
  </div>
</section>

<main class="work">
  <!-- properties palette -->
  <aside class="props">
    <div class="head">Proprietà<button class="x"><svg><use href="#cross"/></svg></button></div>
    <div class="pbody">
      <div class="type"><span class="thumb"><svg><use href="#house"/></svg></span>Vista 3D<i class="caret lg"></i></div>
      <div class="inst">
        <select aria-label="Vista"><option>Vista 3D: {3D}</option></select>
        <button class="edit"><svg><use href="#types"/></svg>Modifica tipo</button>
      </div>
      <div class="scroller">
        <div class="gridwrap">
        <table class="params">
          <colgroup><col class="k"><col class="v"><col class="e"></colgroup>
          <tr class="grp"><th colspan="3">Grafica<svg><use href="#fold"/></svg></th></tr>
          <tr><td>Scala vista</td><td>&nbsp;1 : 100</td><td></td></tr>
          <tr class="off"><td>Scala&nbsp; 1:</td><td>100</td><td></td></tr>
          <tr><td>Livello di dettaglio</td><td>Alto</td><td></td></tr>
          <tr><td>Visibilità stratigrafia</td><td>Mostra entrambi</td><td></td></tr>
          <tr><td>Sostituzioni visibilità/grafi...</td><td><button>Modifica...</button></td><td></td></tr>
          <tr><td>Opzioni di visualizzazione ...</td><td><button>Modifica...</button></td><td></td></tr>
          <tr><td>Disciplina</td><td>Coordinamento</td><td></td></tr>
          <tr><td>Mostra linee nascoste</td><td>Per disciplina</td><td></td></tr>
          <tr><td>Stile visualizzazione analis...</td><td>Nessuno</td><td></td></tr>
          <tr><td><label for="sole">Percorso del sole</label></td><td><input type="checkbox" id="sole"></td><td></td></tr>
          <tr class="grp"><th colspan="3">Estensioni<svg><use href="#fold"/></svg></th></tr>
          <tr><td><label for="rit">Ritaglia vista</label></td><td><input type="checkbox" id="rit" checked></td><td></td></tr>
          <tr><td><label for="reg">Regione di taglio visibile</label></td><td><input type="checkbox" id="reg" checked></td><td></td></tr>
          <tr><td><label for="ann">Taglio annotazione</label></td><td><input type="checkbox" id="ann"></td><td></td></tr>
          <tr><td><label for="ori">Ritaglio orizzontale attivo</label></td><td><input type="checkbox" id="ori"></td><td></td></tr>
          <tr class="off"><td>Offset del ritaglio orizzont...</td><td>304.8000</td><td></td></tr>
          <tr><td><label for="riq">Riquadro di sezione</label></td><td><input type="checkbox" id="riq"></td><td></td></tr>
          <tr class="grp"><th colspan="3">Cinepresa<svg><use href="#fold"/></svg></th></tr>
          <tr><td>Impostazioni di rendering</td><td><button>Modifica...</button></td><td></td></tr>
          <tr class="off"><td><label for="blo">Orientamento bloccato</label></td><td><input type="checkbox" id="blo" disabled></td><td></td></tr>
          <tr class="off"><td><label for="pro">Prospettiva</label></td><td><input type="checkbox" id="pro" disabled></td><td></td></tr>
        </table>
        </div>
        <div class="vbar"><svg><use href="#up"/></svg><i class="knob k1"></i><svg class="end"><use href="#down"/></svg></div>
      </div>
      <div class="foot"><a href="#">Guida alle proprietà</a><button disabled>Applica</button></div>
    </div>
  </aside>

  <!-- 3D view -->
  <section class="view">
    <div class="stage">
      <svg class="scene" viewBox="350 172 760 512">
        <!-- back walls -->
        <path d="M554 188L570 185 684 207 665 236 838 270 750 395V500H500V300L554 250z" fill="#5b5f5d"/>
        <path d="M554 241L664 254V276L554 258z" fill="#777975"/>
        <path d="M554 190L566 191V290H554z" fill="#4a4d4f"/>
        <path d="M565 187h5v68h-5z" fill="#dedcd0"/>
        <path d="M684 208L692 205V234L665 237z" fill="#d6d6cf"/>
        <path d="M553 178L693 204 684 209 570 186 554 190z" fill="#e9e8dc"/>
        <path d="M690 207h3v28l-3-1z" fill="#c6c8bf"/><path d="M689 208v26" stroke="#5b6964"/>
        <path d="M665 236L673 232 875 267 838 271z" fill="#e9e8dc"/>
        <!-- left wall, inner face -->
        <path d="M554 190V284L538 304 509 300V498L462 560V314z" fill="#cfd0c8"/>
        <path d="M553 178L555 190 462 315 453 311z" fill="#e9e8dc"/>
        <path d="M462 314L485 320V340L462 345z" fill="#c3c5be"/>
        <!-- bathroom floor -->
        <path d="M538 303L556 282 668 303 640 325z" fill="#6c6f6f"/>
        <path d="M587 300L623 306V317L581 309z" fill="#898c8c"/>
        <path d="M566 280v6" stroke="#ddd" stroke-width="2"/>
        <!-- long beam -->
        <path d="M531 258L539 248 817 300 808 311z" fill="#8e9092"/>
        <path d="M531 257L808 310 797 325 531 273z" fill="#454749"/>
        <!-- partition -->
        <path d="M509 303L640 327V400L509 374z" fill="#454846"/>
        <path d="M509 303L640 327V363L509 318z" fill="#5b5f5c"/>
        <path d="M640 326L660 298 672 304V345L663 369 640 396z" fill="#cfd0c6"/>
        <path d="M509 298L639 322 657 296 664 299 643 328 509 303z" fill="#ebe8dd"/>
        <!-- dark door and brown wall -->
        <path d="M509 373L640 396V516L509 497z" fill="#3a3529"/>
        <path d="M516 374L581 386V508L516 495z" fill="#272b30"/>
        <path d="M581 386L636 395V512L581 508z" fill="#4a3514"/>
        <path d="M581 384L636 394V402L581 394z" fill="#5e4010"/>
        <path d="M515.500 376V494" stroke="#ddd8c8"/>
        <path d="M635 394L640 396V516H635z" fill="#5a564d"/>
        <path d="M522 437q2 4 4 2l5 1" stroke="#aaa" fill="none"/>
        <!-- orange door -->
        <path d="M475 378L501 350V499L475 534z" fill="#df7736"/>
        <path d="M462 432L475 417V538L462 557z" fill="#dd9638"/>
        <path d="M501 340L504 333V496L501 499z" fill="#6e7173"/><path d="M504 333L508 331V496H504z" fill="#8c8f90"/>
        <path d="M508.500 328V496" stroke="#e8e4da" stroke-width="2"/>
        <path d="M477 470q1 3 4-1M478 476v4M497 450v5" stroke="#443" fill="none" stroke-width="1.500"/>
        <!-- ceiling lift and lamp -->
        <path d="M490 284L522 289" stroke="#555a5d" stroke-width="2"/><ellipse cx="519" cy="292" rx="7" ry="4" fill="#8a8f91"/>
        <path d="M478 342L486 322Q486 298 494 294L500 300 501 318 484 338z" fill="#a9b8bb"/><path d="M487 325Q486 294 495 292 503 293 505 314" stroke="#7d8384" stroke-width="4" fill="none"/>
        <path d="M472 358L504 312 518 313 481 366z" fill="#8b8e90"/><path d="M473 357L503 312 507 314 480 351z" fill="#dedfdc"/><path d="M476 357L504 316 517 313 482 365z" fill="#8b8e90"/>
        <path d="M471 360L481 361V366L472 365zM475 366l26-30v6l-26 38z" fill="#55595b"/>
        <!-- cupboard and back wall, kitchen side -->
        <path d="M640 395L664 369V510H640z" fill="#e09530"/>
        <path d="M640 395L664 369V400L640 410z" fill="#eda036"/>
        <path d="M664 362L695 368V450L664 455z" fill="#2a2f33"/>
        <path d="M664 360L697 364V392L664 382z" fill="#4a4d4e"/>
        <path d="M694 362L699 361V440H694z" fill="#85898c"/>
        <path d="M699 361L763 373 750 395V420L699 410z" fill="#70501c"/>
        <path d="M699 382L749 392V432L699 425z" fill="#51380f"/>
        <path d="M700 428L749 437V465L700 450z" fill="#33373a"/><path d="M699 425L708 427V450H699z" fill="#74501b"/>
        <path d="M741 386L752 386 749 398 741 400zM705 405L719 407V413L705 411z" fill="#4b4f52"/>
        <path d="M664 425L697 430V435L664 432z" fill="#9ba0a3"/>
        <path d="M650 355L662 337 683 340 671 358 652 363z" fill="#8d9092"/><path d="M649 356L670 359V364L650 361z" fill="#4f5356"/>
        <!-- rails -->
        <path d="M599 407L678 301" stroke="#87898c" stroke-width="6"/><path d="M602 409L680 304" stroke="#66696c"/>
        <path d="M594 402L603 401 749 426V433L603 411H594z" fill="#4c5154"/><path d="M594 402L603 400 749 425V428z" fill="#8c9093"/>
        <path d="M594 404h9v12l-8-1z" fill="#3f4447"/>
        <path d="M707 413h3v10h-3zM712 414h3v10h-3z" fill="#7fc1ae"/>
        <!-- floor -->
        <path d="M462 558L500 497 508 495 579 508 640 514 664 505 749 500V634L775 646 770 650z" fill="#fff"/>
        <!-- drawers and bed -->
        <path d="M662 448L668 445 718 450 713 459z" fill="#888c8d"/>
        <path d="M662 450L713 458V498L662 487z" fill="#34393c"/><path d="M662 459l51 8M662 468l51 8M662 477l51 8" stroke="#83888a"/>
        <path d="M713 455L717 452V500H713z" fill="#a2a6a7"/>
        <path d="M718 453L726 449 749 452V470H720z" fill="#505559"/><path d="M718 470Q719 448 728 448L749 450" stroke="#d4d6d6" stroke-width="2" fill="none"/><path d="M722 470Q722 454 731 454L749 456" stroke="#a4a7a8" stroke-width="2" fill="none"/>
        <path d="M716 469L749 471V537L716 525z" fill="#efeaa9"/><path d="M713 470L718 469 716 518 713 516z" fill="#ddd"/>
        <!-- wheelchair -->
        <path d="M657 471L684 476V497L658 493z" fill="#15386c"/><path d="M646 509L660 495 690 500 672 514z" fill="#1763b5"/><path d="M643 515L668 519V525L645 522z" fill="#174b82"/>
        <g fill="none" stroke="#15181b" stroke-width="2"><ellipse cx="651" cy="499" rx="5" ry="20" transform="rotate(15 651 499)"/><ellipse cx="688" cy="499" rx="6" ry="14" transform="rotate(15 688 499)"/><path d="M656 480L659 460M683 477L686 466 690 463M643 515V526M659 478L654 490"/></g>
        <path d="M643 528L653 529 650 532 642 531zM656 530L667 532 664 535 654 533z" fill="#777"/>
        <!-- tv and desk -->
        <path d="M712 553L735 560 742 567 712 562z" fill="#aaadb0"/>
        <path d="M586 542L594 534 749 573 740 588z" fill="#8c8e8f"/>
        <path d="M586 542L739 587V628L588 584V546z" fill="#85888a"/><path d="M739 587L749 573V621L739 628z" fill="#696c6e"/>
        <path d="M598 546L626 555V563L600 556zM600 567L626 574V580L600 575zM637 558L663 567V594L637 585zM713 581L738 588V613L713 607z" fill="#2d3234"/>
        <path d="M588 564L600 555M588 564L626 571M588 584L600 575M626 554V594M627 593L637 585M663 565V605M701 577V616M702 615L713 607M588 584L739 628M586 542L739 587V627M588 545V584" stroke="#4a4f51" fill="none"/>
        <path d="M664 576l37 10M664 583l37 10M664 591l37 10M664 598l37 10" stroke="#33383a"/>
        <path d="M594 477L641 490V548L594 534z" fill="#2c3034"/><path d="M594 477L641 490V548" fill="none" stroke="#8c8f92"/>
        <path d="M668 492L745 514V572H743V562L668 541z" fill="#000"/>
        <!-- outer walls -->
        <path d="M453 311L462 314V558L775 648 773 667 453 572z" fill="#434949"/>
        <path d="M838 270L875 267 777 403 749 392z" fill="#e7e7da"/>
        <path d="M749 392L777 401V643L749 634z" fill="#454a48"/>
        <path d="M777 401L875 268V518L777 645z" fill="#cecfc7"/>
        <path d="M862 287L875 270V518L862 534z" fill="#bdbeb6"/>
        <path d="M773 648L875 517V530L773 667z" fill="#a0a4a5"/>
        <path d="M862 319L868 315V334L862 337z" fill="#707475"/><path d="M866 322v5" stroke="#ddd"/>
        <!-- windows -->
        <path d="M784 434h4v160l-4-2z" fill="#555d5d"/>
        <path d="M788 430L805 408V572L788 594z" fill="#fff"/>
        <path d="M843 348L860 333V497L843 518z" fill="#fff"/>
        <path d="M803 402L844 352V518L806 545z" fill="#394144"/>
        <path d="M826 378L843 356V518L826 512z" fill="#454b4b"/>
        <path d="M807 440L823 423V507L807 526z" fill="#677370"/><path d="M811 438V522" stroke="#8b9895" stroke-width="3"/>
        <path d="M807 401L823 384V413L807 431z" fill="#48514f"/><path d="M825 385V510M804 436l20-20" stroke="#777f7f"/>
        <path d="M837 365V516" stroke="#383e3f" stroke-width="2"/>
        <path d="M805 545L828 516H843L807 562z" fill="#e2e2d6"/>
        <path d="M809 516L818 508V515L809 524z" fill="#bec2b6"/>
        <path d="M799 394L820 343 843 333 858 337 848 350 812 399z" fill="#fafafa" stroke="#c8c8c8"/>
        <g stroke="#aaa"><path d="M832 351l25-11M818 358l3-3M811 377l4-2M824 349l3 1M808 389l4 1M838 341l3-1M828 365l5-5M820 375l3-3M814 366l2 3M830 344l2 2M838 354l4-4" fill="none"/></g>
        <path d="M799 394L812 395V400L801 399zM801 400l7 1-3 12-4-3z" fill="#303537"/>
        <path d="M806 572L840 528V558L807 602z" fill="#5f5a58"/><path d="M815 570L833 547V564L815 586z" fill="#bbbab1"/>
        <path d="M806 571l4 2v28l-4 1z" fill="#47454a"/>
      </svg>

      <div class="mdi"><button><i class="dash"></i></button><button><svg><path d="M5 3h9v8h-2M3 5h9v8H3zM6 8h3v3H6z" fill="none" stroke="#222" stroke-width="1.200"/></svg></button><button><svg><path d="M2 3l2-1 4 4 4-4 2 1-4 5 4 4-2 2-4-4-4 4-2-2 4-4z" fill="#fff" stroke="#222"/></svg></button></div>

      <svg class="cube" viewBox="0 0 100 84">
        <ellipse cx="47" cy="51" rx="42" ry="22" fill="none" stroke="#c9caca" stroke-width="12"/>
        <ellipse cx="47" cy="51" rx="42" ry="22" fill="none" stroke="#f0f0f0" stroke-width="10"/>
        <ellipse cx="50" cy="56" rx="29" ry="8" fill="#bbb" opacity=".6"/>
        <path d="M23 17L57 25V55L24 49z" fill="#e3e4e4" stroke="#7d7f80"/>
        <path d="M23 17L38 3 69 5 57 25z" fill="#eeefef" stroke="#7d7f80"/>
        <path d="M57 25L69 5 68 37 57 55z" fill="#d2d3d3" stroke="#7d7f80"/>
        <text x="26" y="37" class="cubetext">DESTRA</text>
        <text x="42" y="18" class="cubetop">S</text>
        <text x="0" y="40" class="comp">NORD</text><text x="78" y="55" class="comp">SUD</text><text x="20" y="74" class="comp">OVEST</text>
      </svg>

      <div class="navbar">
        <svg viewBox="0 0 36 120">
          <path d="M1 15V5q0-4 4-4h26q4 0 4 4v10" fill="#d5d5d5"/>
          <circle cx="27" cy="7" r="3" fill="none" stroke="#888"/><path d="M25 5l4 4M29 5l-4 4" stroke="#888"/>
          <path d="M29 22v12a12 12 0 1 1-12-12z" fill="#ededed" stroke="#8d9091"/><circle cx="17" cy="33" r="6" fill="#fafafa" stroke="#8d9091" stroke-width="1.500"/><path d="M9 25l4 4M9 41l4-4M25 41l-4-4" stroke="#8d9091"/>
          <path d="M14 51h6l-3 3zM14 93h6l-3 3z" fill="#888"/><path d="M5 58h25" stroke="#aaa"/>
          <path d="M10 67h10v10H10z" fill="#8fcb8d" stroke="#6cab70"/><circle cx="20" cy="77" r="4" fill="#f4f4f4" stroke="#8d9091"/><path d="M23 80l4 4" stroke="#8d9091" stroke-width="2"/>
          <circle cx="27" cy="110" r="3" fill="none" stroke="#888"/><path d="M25 110h4" stroke="#888"/>
        </svg>
      </div>
    </div>
    <div class="vbar tall"><svg><use href="#up"/></svg><i class="knob k2"></i><svg class="end"><use href="#down"/></svg></div>
    <div class="vctrl">
      <span class="scale">1 : 100</span>
      <button><svg><use href="#v-detail"/></svg></button><button><svg><use href="#v-style"/></svg></button><button><svg><use href="#v-sun"/></svg></button><button><svg><use href="#v-shadow"/></svg></button><button><svg><use href="#v-pot"/></svg></button><button><svg><use href="#v-crop"/></svg></button><button><svg><use href="#v-cropshow"/></svg></button><button><svg><use href="#v-lock"/></svg></button><button><svg><use href="#v-glass"/></svg></button><button><svg><use href="#v-bulb"/></svg></button><button><svg><use href="#v-temp"/></svg></button><button><svg><use href="#v-anal"/></svg></button><button><svg><use href="#v-disp"/></svg></button><button><svg><use href="#v-cons"/></svg></button>
      <div class="hbar"><svg><use href="#left"/></svg><i class="knob"></i><svg class="end"><use href="#right"/></svg></div>
      <svg class="grip"><path d="M12 6h2M8 10h2M12 10h2M4 14h2M8 14h2M12 14h2" stroke="#bbb" stroke-width="2"/></svg>
    </div>
  </section>

  <!-- project browser -->
  <aside class="browser">
    <div class="head"><span>Browser di progetto - MODELLO STAN...</span><button class="x"><svg><use href="#cross"/></svg></button></div>
    <div class="bbody">
      <div class="treewrap">
        <ul class="tree root">
          <li><div class="row"><button class="tg">−</button><i class="ln short"></i><svg><use href="#views"/></svg>Viste (tutto)</div>
            <ul class="tree">
              <li><div class="row"><button class="tg">−</button><i class="ln"></i>Piante dei pavimenti</div>
                <ul class="tree leaf">
                  <li><div class="row">0 - Piano Terra</div></li>
                  <li><div class="row">1 - Piano Primo</div></li>
                  <li><div class="row">Planimetria</div></li>
                </ul></li>
              <li><div class="row"><button class="tg">+</button><i class="ln"></i>Piante dei controsoffitti</div></li>
              <li><div class="row"><button class="tg">−</button><i class="ln"></i>Viste 3D</div>
                <ul class="tree leaf">
                  <li><div class="row"><b>{3D}</b></div></li>
                  <li><div class="row">{3D} - Copia 1</div></li>
                  <li><div class="row">{3D} - Copia 2</div></li>
                  <li><div class="row">{3D} - Copia 3</div></li>
                  <li><div class="row">{3D} - Copia 4</div></li>
                </ul></li>
              <li><div class="row"><button class="tg">−</button><i class="ln"></i>Prospetti</div>
                <ul class="tree leaf">
                  <li><div class="row">Est</div></li>
                  <li><div class="row">Nord</div></li>
                  <li><div class="row">Ovest</div></li>
                  <li><div class="row">Sud</div></li>
                </ul></li>
              <li><div class="row"><button class="tg">−</button><i class="ln"></i>Sezioni (Sezione 1)</div>
                <ul class="tree leaf">
                  <li><div class="row">Sezione 1</div></li>
                  <li><div class="row">Sezione 2</div></li>
                  <li><div class="row">Sezione 3</div></li>
                  <li><div class="row">Sezione 4</div></li>
                </ul></li>
            </ul></li>
          <li><div class="row"><i class="tg none"></i><i class="ln short"></i><svg><use href="#legend"/></svg>Legende</div></li>
          <li><div class="row"><button class="tg">−</button><i class="ln short"></i><svg><use href="#sched"/></svg>Abachi/Quantità</div>
            <ul class="tree leaf">
              <li><div class="row">Abaco dei locali</div></li>
              <li><div class="row">Abaco multicategoria</div></li>
              <li><div class="row">Computo dei materiali muro</div></li>
            </ul></li>
          <li><div class="row"><i class="tg none"></i><i class="ln short"></i><svg><use href="#sheet"/></svg>Tavole (tutto)</div></li>
        </ul>
      </div>
      <div class="vbar"><svg><use href="#up"/></svg><i class="knob k3"></i><svg class="end"><use href="#down"/></svg></div>
      <div class="hbar"><svg><use href="#left"/></svg><i class="knob"></i><svg class="end"><use href="#right"/></svg></div>
    </div>
  </aside>
</main>

<div class="status">
  <span class="msg">Fare clic per selezionare, premere TAB per alternare, CTRL per agg</span>
  <svg class="work-ic"><use href="#s-work"/></svg>
  <select aria-label="Workset"><option></option></select>
  <svg class="req-ic"><use href="#s-req"/></svg><span class="zero">:0</span>
  <button class="opt"><svg><use href="#s-opt"/></svg></button>
  <button class="opt"><svg><use href="#s-add"/></svg></button>
  <select class="grey" aria-label="Opzione"><option>Modello principale</option></select>
  <div class="selopts">
    <button><svg><use href="#s-link"/></svg></button><button><svg><use href="#s-under"/></svg></button><button><svg><use href="#s-pin"/></svg></button><button><svg><use href="#s-face"/></svg></button><button><svg><use href="#s-drag"/></svg></button><button><svg><use href="#s-bg"/></svg></button><svg class="filter"><use href="#s-filter"/></svg><span>:0</span>
  </div>
</div>

<footer class="taskbar">
  <button><svg><use href="#t-win"/></svg></button>
  <button><svg><use href="#t-cort"/></svg></button>
  <button><svg><use href="#t-task"/></svg></button>
  <button class="run"><svg><use href="#t-exp"/></svg></button>
  <button><svg><use href="#t-store"/></svg></button>
  <button class="run"><svg><use href="#t-edge"/></svg></button>
  <button class="run"><svg><use href="#t-chrome"/></svg></button>
  <button class="run"><span class="ai">Ai</span></button>
  <button class="run"><svg><use href="#t-oo"/></svg></button>
  <button class="run cur"><span class="rv"><svg><use href="#revit"/></svg></span></button>
  <div class="tray">
    <svg class="people"><use href="#t-people"/></svg>
    <svg><use href="#t-up"/></svg>
    <svg><use href="#t-shield"/></svg>
    <svg><use href="#t-cloud"/></svg>
    <svg><use href="#t-wifi"/></svg>
    <svg><use href="#t-vol"/></svg>
    <svg><use href="#t-drop"/></svg>
    <div class="clock">00:03<br>06/11/2018</div>
    <div class="note"><svg><use href="#t-note"/></svg><span>8</span></div>
  </div>
</footer>

</body>
</html>
```
FILE: styles.css
```
* { box-sizing: border-box; }
body {
    margin: 0;
    height: 100vh;
    display: flex;
    flex-direction: column;
    overflow: hidden;
    font: 12px/16px Roboto, "Open Sans", sans-serif;
    color: #303235;
    background: #f1f2f1;
}
button, input, select {
    font: inherit;
    color: inherit;
    padding: 0;
    border: 0;
    background: none;
}
svg { width: 16px; height: 16px; flex: none; display: block; }
.sprite { position: absolute; width: 0; height: 0; }
i { font-style: normal; }
a { color: inherit; text-decoration: none; }
.i20 { width: 20px; height: 20px; }
.i18 { width: 18px; height: 18px; }

.caret {
    display: inline-block;
    flex: none;
    vertical-align: middle;
    border: 3px solid transparent;
    border-top-color: #3a3d40;
    border-bottom: 0;
}
.caret.lg { border-width: 4px; border-bottom: 0; }
.caret.dim { border-top-color: #8d8f91; }
.caret.side {
    border: 3px solid transparent;
    border-left: 4px solid #222;
    border-right: 0;
}
.dash { display: block; width: 10px; height: 3px; background: #1c1e20; }

/* title bar */
.titlebar {
    display: flex;
    align-items: center;
    height: 24px;
    background: #cbcccc;
}
.q {
    width: 24px;
    height: 22px;
    flex: none;
    display: flex;
    align-items: center;
    justify-content: center;
}
.q.logo { width: 29px; padding-right: 5px; }
.q.on { background: #a9d0f0; border: 1px solid #3487c8; }
.q.slim { width: 18px; }
.c { width: 12px; flex: none; display: flex; justify-content: center; }
.vsep { width: 1px; height: 18px; flex: none; margin: 0 3px; background: #bbbcbc; }
.title {
    margin: 0 0 0 17px;
    font-size: 12px;
    font-weight: normal;
    white-space: nowrap;
}
.infocenter { margin-left: auto; display: flex; align-items: center; flex: none; }
.search {
    width: 180px;
    height: 22px;
    padding: 0 2px;
    background: #fff;
    border: 2px solid #4a1a1e;
    font-style: italic;
    font-size: 11px;
}
.search::placeholder { color: #555; opacity: 1; }
.login { display: flex; align-items: center; gap: 6px; width: 117px; padding-left: 4px; }
.login .caret { margin-left: auto; }
.q.wide { width: 34px; }
.q.win { width: 26px; }
.q.min { margin-left: 9px; padding-top: 8px; }

/* tabs */
.tabs {
    display: flex;
    align-items: stretch;
    height: 24px;
    background: #cbcccc;
    white-space: nowrap;
}
.tabs a { padding: 6px 9px 0 10px; color: #3c3e41; }
.tabs a.file { width: 22px; padding: 6px 0 0 2px; color: #f4f4f4; }
.tabs a.active { margin: 4px 2px 0 0; padding: 2px 8px 0 9px; background: #f1f2f2; color: #222; }
.more { display: flex; align-items: center; padding: 4px 8px 0 4px; }
.more i { border: 4px solid transparent; border-left: 5px solid #f6f6f6; border-right: 0; }
.ribbonmin { display: flex; align-items: center; gap: 4px; padding-top: 6px; }
.ribbonmin span {
    display: flex;
    align-items: center;
    justify-content: center;
    width: 16px;
    height: 9px;
    border: 1px solid #333;
    border-radius: 4px;
}
.tri-up { border: 3px solid transparent; border-bottom-color: #333; border-top: 0; }

/* ribbon */
.ribbon {
    display: flex;
    height: 97px;
    flex: none;
    padding-left: 2px;
    background: #f1f2f2;
    border-bottom: 1px solid #d2d3d3;
    white-space: nowrap;
}
.panel {
    display: flex;
    flex-direction: column;
    flex: none;
    border-right: 1px solid #dcddde;
}
.tools { display: flex; padding-top: 3px; height: 77px; }
.ptitle { text-align: center; line-height: 16px; }
.big {
    display: flex;
    flex-direction: column;
    align-items: center;
    height: 72px;
    padding-top: 4px;
    line-height: 20px;
}
.big svg { width: 32px; height: 32px; }
.sel { width: 53px; margin-left: 10px; border: 1px solid #3487c8; background: #a9d0f0; }
.big svg.cur { width: 18px; height: 24px; margin: 2px 0 5px; }
.col { display: flex; flex-direction: column; }
.col button { display: flex; align-items: center; height: 24px; gap: 5px; }
.col .caret { margin-left: 3px; }
.p-sel { width: 75px; }
.p-build { width: 478px; }
.p-build .tools { padding-left: 4px; }
.p-build .big { width: 45px; }
.p-build .big + .col { margin-left: 1px; }
.p-build .c1 { width: 113px; }
.p-build .c2 { width: 106px; }
.p-circ { width: 127px; }
.p-circ .tools { padding-left: 10px; }
.p-model { width: 148px; }
.p-model .tools { padding-left: 7px; }
.p-room { width: 92px; }
.p-room .tools { padding-left: 14px; }
.p-room .col { width: 37px; }
.p-open { width: 164px; }
.p-open .big { width: 90px; }
.p-open .big + .big { width: 44px; }
.p-open .col { margin-left: 7px; }
.p-ref { width: 73px; }
.p-ref .tools { padding: 15px 0 0 28px; }
.p-plane { width: 89px; }
.p-plane .big { width: 62px; }

/* work area */
.work { flex: 1; min-height: 0; display: flex; gap: 4px; padding-top: 25px; }
.head {
    display: flex;
    align-items: center;
    height: 19px;
    padding: 0 2px 0 4px;
    background: #b3c8d9;
    color: #111;
}
.head span { flex: 1; white-space: nowrap; }
.x { margin-left: auto; }
.x svg { width: 14px; height: 14px; }
.vbar {
    width: 17px;
    display: flex;
    flex-direction: column;
    align-items: center;
    background: #f0f0f0;
}
.end { margin-top: auto; }
.vbar .end { margin-bottom: 1px; }
.knob { display: block; width: 15px; background: #c9c9c9; }
.hbar { display: flex; align-items: center; background: #f0f0f0; }
.hbar .end { margin: 0 0 0 auto; }
.hbar .knob { height: 15px; }

/* properties */
.props { width: 344px; display: flex; flex-direction: column; }
.pbody {
    flex: 1;
    min-height: 0;
    display: flex;
    flex-direction: column;
    margin: 2px 2px 0 0;
    border-left: 2px solid #73787c;
    border-top: 1px solid #73787c;
}
.type {
    display: flex;
    align-items: center;
    height: 72px;
    padding: 3px 2px;
    border: 1px solid #d9d9d9;
    background: #eeefef;
    color: #44474a;
}
.type .caret { margin-left: auto; }
.thumb {
    width: 66px;
    height: 66px;
    display: grid;
    place-items: center;
    margin-right: 5px;
    border: 1px solid #d5d6d6;
}
.thumb svg { width: 32px; height: 32px; }
.inst { display: flex; height: 24px; padding-top: 1px; }
.inst select, .status select {
    appearance: none;
    background: #e2e3e3 url("data:image/svg+xml,%3Csvg xmlns='http://www.w3.org/2000/svg' width='10' height='6'%3E%3Cpath d='M1 1l4 4 4-4' fill='none' stroke='%23777'/%3E%3C/svg%3E") no-repeat right 3px center;
    border: 1px solid #bfc0c0;
}
.inst select { width: 234px; padding: 0 4px; }
.edit { display: flex; gap: 5px; align-items: center; padding: 0 0 4px 6px; white-space: nowrap; }
.scroller { flex: 1; min-height: 0; display: flex; }
.gridwrap { flex: 1; overflow: hidden; background: #fff; }
.params { width: 100%; table-layout: fixed; border-collapse: collapse; color: #1b1c1e; }
.k { width: 156px; }
.e { width: 11px; }
.params tr { height: 18px; }
.params td {
    height: 18px;
    padding: 0 0 0 2px;
    line-height: 16px;
    border-right: 1px dotted #999;
    border-bottom: 1px dotted #999;
    white-space: nowrap;
}
.params td:first-child { padding-left: 7px; }
.params th {
    padding: 0 6px 0 2px;
    line-height: 18px;
    text-align: left;
    font-weight: normal;
    background: #d3d4d4;
}
.params th svg { float: right; width: 8px; height: 10px; margin-top: 4px; }
.params .off { color: #85888b; }
.params button {
    display: block;
    width: 100%;
    height: 16px;
    line-height: 14px;
    background: #d9dada;
    border: 1px solid #b9baba;
    border-right: 2px solid #8c8e8f;
    border-bottom: 2px solid #8c8e8f;
}
.params input {
    appearance: none;
    display: block;
    width: 13px;
    height: 13px;
    margin: 3px 0 0;
    border: 1px solid #333;
    background: #fff;
}
.params input:checked::after {
    content: "";
    display: block;
    width: 8px;
    height: 4px;
    margin: 2px 0 0 1px;
    border: solid #444;
    border-width: 0 0 1px 1px;
    transform: rotate(-45deg);
}
.params input:disabled { border-color: #ccc; }
.k1 { height: 142px; margin-top: 2px; }
.foot {
    display: flex;
    align-items: center;
    justify-content: space-between;
    height: 26px;
    padding: 0 2px 3px;
}
.foot a { color: #2a6fc4; text-decoration: underline; }
.foot button { width: 73px; height: 21px; background: #cdcece; color: #8f9193; }

/* 3D view */
.view {
    flex: 1;
    min-width: 0;
    display: grid;
    grid-template: minmax(0, 1fr) 20px / minmax(0, 1fr) 17px;
    border-left: 2px solid #6f7376;
    border-top: 2px solid #84888a;
    background: #fff;
}
.stage { position: relative; min-height: 0; }
.scene { width: 100%; height: 100%; }
.mdi { position: absolute; top: 6px; right: 2px; display: flex; gap: 2px; }
.mdi button { width: 16px; height: 16px; }
.mdi .dash { width: 12px; height: 4px; margin-top: 3px; background: #fff; border: 1px solid #333; }
.cube { position: absolute; top: 67px; right: 13px; width: 100px; height: 84px; }
.cubetext { font-size: 8px; fill: #77797b; transform: rotate(10deg); transform-origin: 30px 36px; }
.cubetop { font-size: 12px; fill: #77797b; transform: rotate(185deg); transform-origin: 46px 14px; }
.comp { font-size: 7px; fill: #999; }
.navbar {
    position: absolute;
    top: 150px;
    right: 0;
    width: 36px;
    height: 120px;
    border: 2px solid #c2c3c3;
    border-radius: 5px;
    background: #f0f0f0;
}
.navbar svg { width: 100%; height: 100%; }
.tall .knob { margin-top: 231px; height: 17px; }
.vctrl { grid-column: 1 / 3; display: flex; align-items: center; background: #f2f2f2; }
.scale { width: 77px; padding-left: 24px; color: #222; }
.vctrl button { width: 21px; display: grid; place-items: center; }
.vctrl .hbar { flex: 1; }
.vctrl .knob { width: 17px; margin-left: 170px; }
.grip { margin-left: 2px; }

/* browser */
.browser { width: 234px; display: flex; flex-direction: column; }
.bbody {
    flex: 1;
    min-height: 0;
    display: grid;
    grid-template: minmax(0, 1fr) 17px / minmax(0, 1fr) 17px;
    margin-top: 1px;
    border-left: 2px solid #73787c;
    border-top: 1px solid #73787c;
    background: #fff;
}
.treewrap { overflow: hidden; padding-top: 1px; }
.tree { list-style: none; margin: 0; padding: 0 0 0 20px; }
.tree.root { padding: 0; }
.tree li { position: relative; }
.tree li::before {
    content: "";
    position: absolute;
    left: 9px;
    top: 0;
    bottom: 0;
    border-left: 1px dotted #8b9197;
}
.tree li:last-child::before { bottom: auto; height: 9px; }
.tree.root > li:first-child::before { top: 9px; }
.row {
    display: flex;
    align-items: center;
    height: 18px;
    padding-left: 5px;
    white-space: nowrap;
    color: #1b1c1e;
}
.row svg { margin: 0 6px 0 1px; }
.row b { background: #d4d5d5; }
.tg {
    position: relative;
    width: 9px;
    height: 9px;
    flex: none;
    border: 1px solid #8a9db0;
    background: #f6f9fc;
    font-size: 9px;
    line-height: 6px;
    color: #1c3f74;
}
.tg.none { visibility: hidden; }
.ln { width: 9px; margin-right: 4px; border-top: 1px dotted #8b9197; }
.ln.short { width: 6px; margin: 0; }
.leaf .row::before { content: ""; width: 14px; margin: 0 4px; border-top: 1px dotted #8b9197; }
.k3 { height: 86px; margin-top: 2px; }
.bbody > .hbar { grid-column: 1 / 3; }
.bbody > .hbar .knob { width: 83px; }
.bbody > .hbar .end { margin-right: 17px; }

/* status bar */
.status {
    display: flex;
    align-items: center;
    height: 24px;
    flex: none;
    border-top: 2px solid #b5b6b6;
    background: #cdcece;
    white-space: nowrap;
}
.msg { width: 347px; padding-left: 1px; }
.work-ic { margin: 0 8px 0 6px; }
.status select { width: 204px; height: 19px; padding: 0 2px; background-color: #fff; border-color: #e5e5e5; }
.status select.grey { margin-left: 3px; color: #75787a; }
.req-ic { margin: 0 4px 0 9px; }
.zero { width: 28px; }
.opt { width: 26px; display: grid; place-items: center; }
.selopts { margin-left: auto; display: flex; padding-right: 17px; }
.selopts button { width: 26px; display: grid; place-items: center; }

/* taskbar */
.taskbar { display: flex; height: 40px; flex: none; background: #06070b; color: #f2f2f2; }
.taskbar button { width: 49px; display: grid; place-items: center; border-bottom: 3px solid transparent; }
.taskbar button svg { width: 24px; height: 24px; }
.taskbar .run {
    border-image: linear-gradient(to right, transparent 4px, #7cc3cd 4px, #7cc3cd 45px, transparent 45px) 3;
    border-width: 0 0 3px;
    border-style: solid;
}
.taskbar .cur { background: #3b3e3e; border-image: none; border-color: #7cc3cd; }
.ai {
    width: 22px;
    height: 20px;
    border: 1px solid #f09a2c;
    background: #261507;
    color: #f09a2c;
    font-weight: bold;
    line-height: 18px;
}
.rv { width: 24px; height: 24px; padding: 2px; background: #eef0f4; }
.taskbar .rv svg { width: 20px; height: 20px; }
.tray { margin-left: auto; display: flex; align-items: center; gap: 8px; }
.people { margin-right: 12px; }
.clock { width: 64px; text-align: center; line-height: 18px; }
.note { position: relative; width: 47px; padding-left: 6px; }
.note span {
    position: absolute;
    left: 14px;
    top: 7px;
    width: 16px;
    height: 16px;
    border-radius: 8px;
    border: 1px solid #888;
    background: #2b2d30;
    font-size: 11px;
    line-height: 14px;
    text-align: center;
}
```
